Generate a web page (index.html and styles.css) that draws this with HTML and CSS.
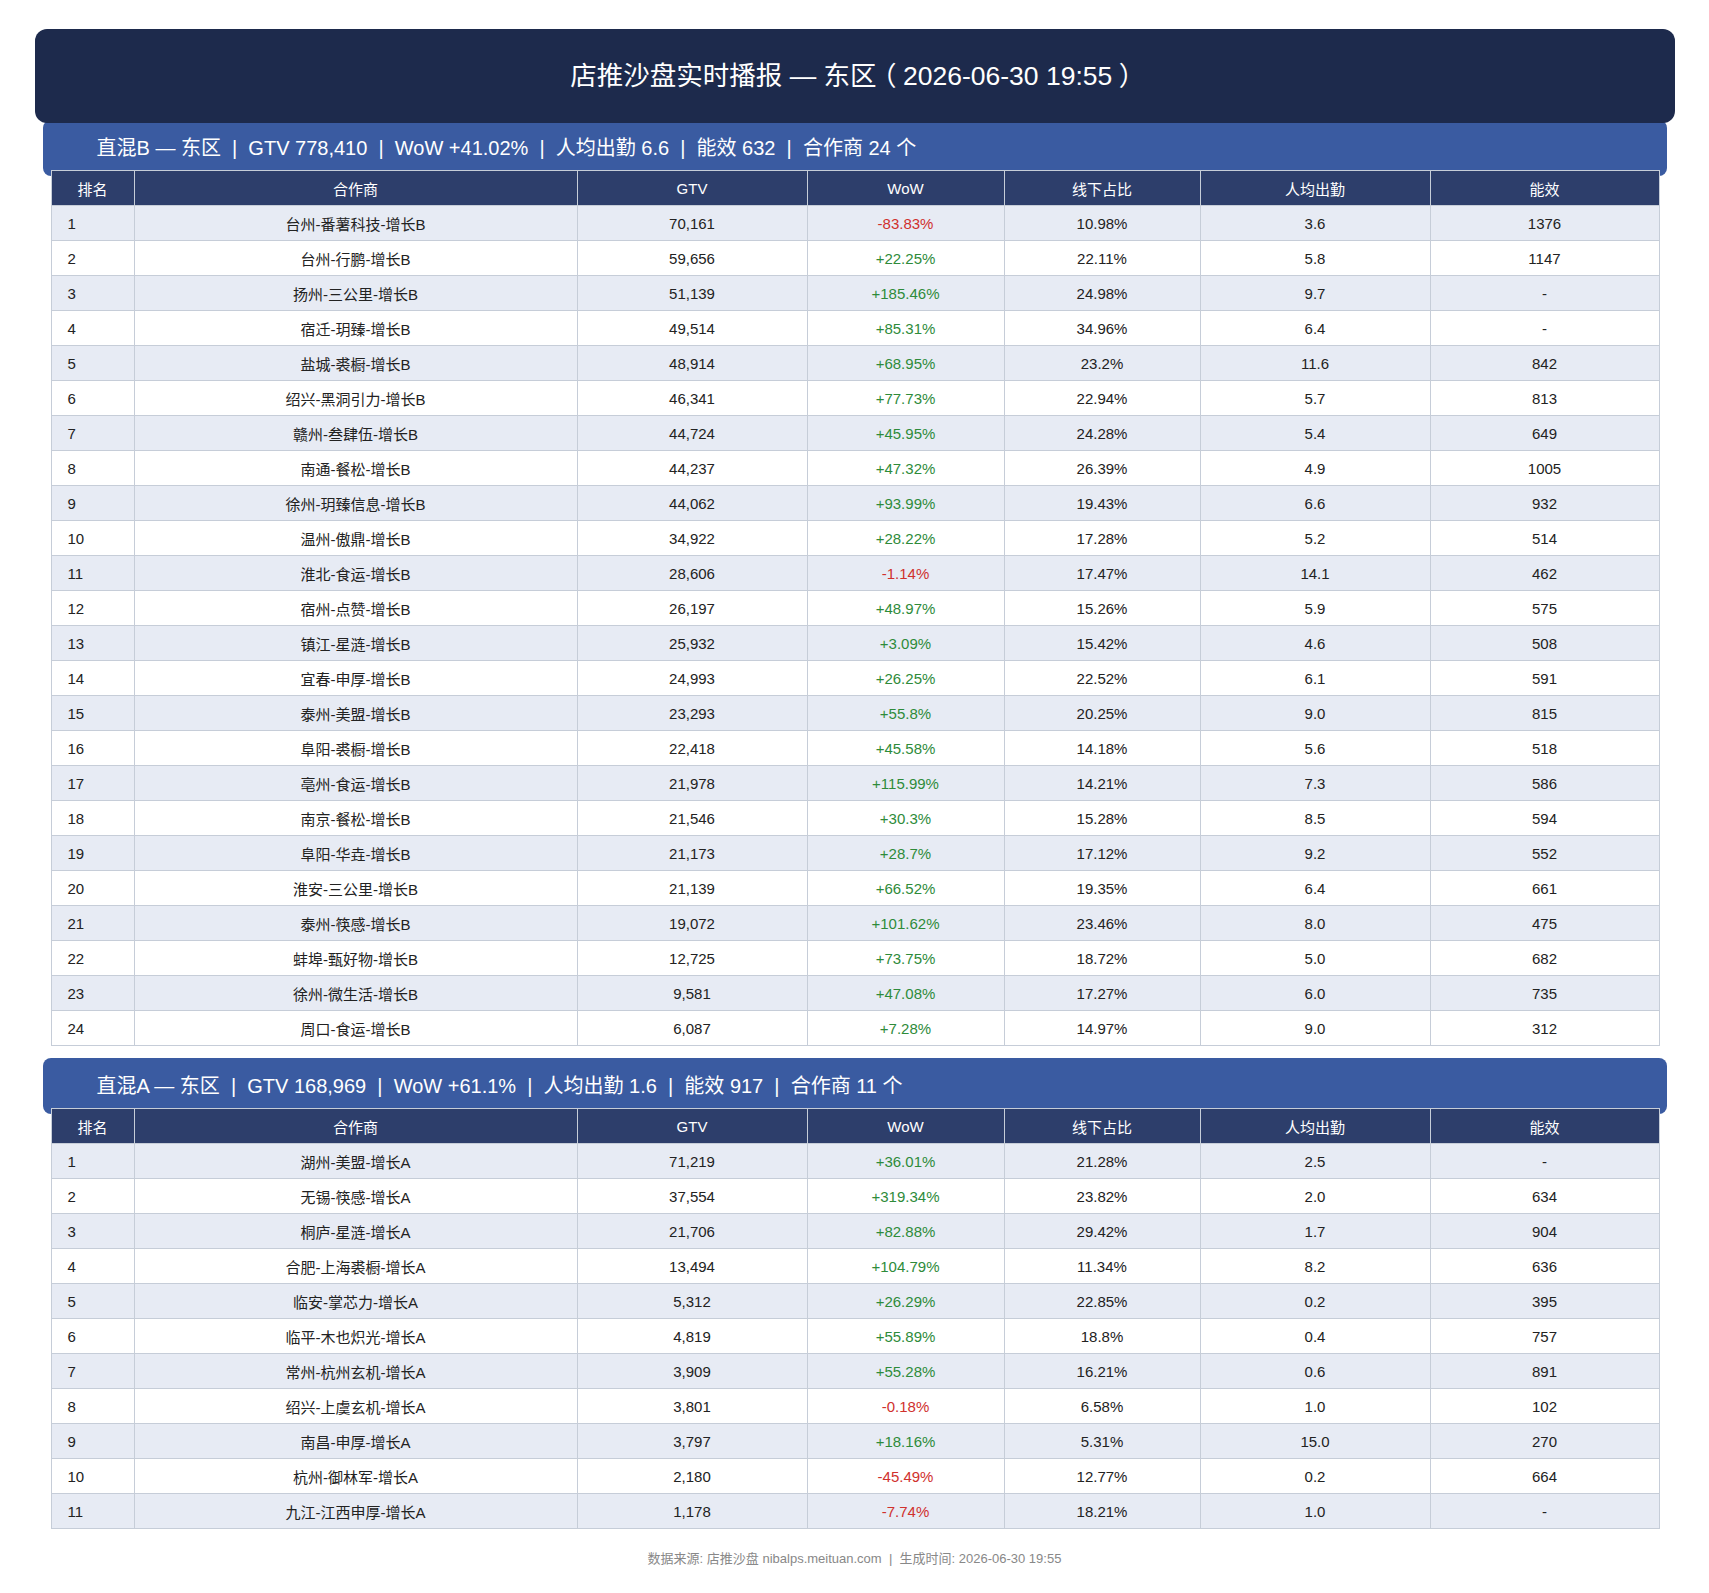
FILE: index.html
```html
<!DOCTYPE html>
<html lang="zh-CN">
<head>
<meta charset="utf-8">
<title>店推沙盘实时播报 — 东区</title>
<link rel="stylesheet" href="styles.css">
</head>
<body>
<div class="page">
  <header class="title-bar"><h1>店推沙盘实时播报 — 东区<span class="fw">（</span>2026-06-30 19:55<span class="fw">）</span></h1></header>

  <section class="block">
    <h2 class="sec-bar">直混B — 东区&nbsp; |&nbsp; GTV 778,410&nbsp; |&nbsp; WoW +41.02%&nbsp; |&nbsp; 人均出勤 6.6&nbsp; |&nbsp; 能效 632&nbsp; |&nbsp; 合作商 24 个</h2>
    <table class="tbl">
      <colgroup>
        <col class="c-rank"><col class="c-name"><col class="c-gtv"><col class="c-wow"><col class="c-off"><col class="c-att"><col class="c-eff">
      </colgroup>
      <thead>
        <tr><th>排名</th><th>合作商</th><th>GTV</th><th>WoW</th><th>线下占比</th><th>人均出勤</th><th>能效</th></tr>
      </thead>
      <tbody>
        <tr><td class="rank">1</td><td>台州-番薯科技-增长B</td><td>70,161</td><td class="neg">-83.83%</td><td>10.98%</td><td>3.6</td><td>1376</td></tr>
        <tr><td class="rank">2</td><td>台州-行鹏-增长B</td><td>59,656</td><td class="pos">+22.25%</td><td>22.11%</td><td>5.8</td><td>1147</td></tr>
        <tr><td class="rank">3</td><td>扬州-三公里-增长B</td><td>51,139</td><td class="pos">+185.46%</td><td>24.98%</td><td>9.7</td><td>-</td></tr>
        <tr><td class="rank">4</td><td>宿迁-玥臻-增长B</td><td>49,514</td><td class="pos">+85.31%</td><td>34.96%</td><td>6.4</td><td>-</td></tr>
        <tr><td class="rank">5</td><td>盐城-裘橱-增长B</td><td>48,914</td><td class="pos">+68.95%</td><td>23.2%</td><td>11.6</td><td>842</td></tr>
        <tr><td class="rank">6</td><td>绍兴-黑洞引力-增长B</td><td>46,341</td><td class="pos">+77.73%</td><td>22.94%</td><td>5.7</td><td>813</td></tr>
        <tr><td class="rank">7</td><td>赣州-叁肆伍-增长B</td><td>44,724</td><td class="pos">+45.95%</td><td>24.28%</td><td>5.4</td><td>649</td></tr>
        <tr><td class="rank">8</td><td>南通-餐松-增长B</td><td>44,237</td><td class="pos">+47.32%</td><td>26.39%</td><td>4.9</td><td>1005</td></tr>
        <tr><td class="rank">9</td><td>徐州-玥臻信息-增长B</td><td>44,062</td><td class="pos">+93.99%</td><td>19.43%</td><td>6.6</td><td>932</td></tr>
        <tr><td class="rank">10</td><td>温州-傲鼎-增长B</td><td>34,922</td><td class="pos">+28.22%</td><td>17.28%</td><td>5.2</td><td>514</td></tr>
        <tr><td class="rank">11</td><td>淮北-食运-增长B</td><td>28,606</td><td class="neg">-1.14%</td><td>17.47%</td><td>14.1</td><td>462</td></tr>
        <tr><td class="rank">12</td><td>宿州-点赞-增长B</td><td>26,197</td><td class="pos">+48.97%</td><td>15.26%</td><td>5.9</td><td>575</td></tr>
        <tr><td class="rank">13</td><td>镇江-星涟-增长B</td><td>25,932</td><td class="pos">+3.09%</td><td>15.42%</td><td>4.6</td><td>508</td></tr>
        <tr><td class="rank">14</td><td>宜春-申厚-增长B</td><td>24,993</td><td class="pos">+26.25%</td><td>22.52%</td><td>6.1</td><td>591</td></tr>
        <tr><td class="rank">15</td><td>泰州-美盟-增长B</td><td>23,293</td><td class="pos">+55.8%</td><td>20.25%</td><td>9.0</td><td>815</td></tr>
        <tr><td class="rank">16</td><td>阜阳-裘橱-增长B</td><td>22,418</td><td class="pos">+45.58%</td><td>14.18%</td><td>5.6</td><td>518</td></tr>
        <tr><td class="rank">17</td><td>亳州-食运-增长B</td><td>21,978</td><td class="pos">+115.99%</td><td>14.21%</td><td>7.3</td><td>586</td></tr>
        <tr><td class="rank">18</td><td>南京-餐松-增长B</td><td>21,546</td><td class="pos">+30.3%</td><td>15.28%</td><td>8.5</td><td>594</td></tr>
        <tr><td class="rank">19</td><td>阜阳-华垚-增长B</td><td>21,173</td><td class="pos">+28.7%</td><td>17.12%</td><td>9.2</td><td>552</td></tr>
        <tr><td class="rank">20</td><td>淮安-三公里-增长B</td><td>21,139</td><td class="pos">+66.52%</td><td>19.35%</td><td>6.4</td><td>661</td></tr>
        <tr><td class="rank">21</td><td>泰州-筷感-增长B</td><td>19,072</td><td class="pos">+101.62%</td><td>23.46%</td><td>8.0</td><td>475</td></tr>
        <tr><td class="rank">22</td><td>蚌埠-甄好物-增长B</td><td>12,725</td><td class="pos">+73.75%</td><td>18.72%</td><td>5.0</td><td>682</td></tr>
        <tr><td class="rank">23</td><td>徐州-微生活-增长B</td><td>9,581</td><td class="pos">+47.08%</td><td>17.27%</td><td>6.0</td><td>735</td></tr>
        <tr><td class="rank">24</td><td>周口-食运-增长B</td><td>6,087</td><td class="pos">+7.28%</td><td>14.97%</td><td>9.0</td><td>312</td></tr>
      </tbody>
    </table>
  </section>

  <section class="block">
    <h2 class="sec-bar">直混A — 东区&nbsp; |&nbsp; GTV 168,969&nbsp; |&nbsp; WoW +61.1%&nbsp; |&nbsp; 人均出勤 1.6&nbsp; |&nbsp; 能效 917&nbsp; |&nbsp; 合作商 11 个</h2>
    <table class="tbl">
      <colgroup>
        <col class="c-rank"><col class="c-name"><col class="c-gtv"><col class="c-wow"><col class="c-off"><col class="c-att"><col class="c-eff">
      </colgroup>
      <thead>
        <tr><th>排名</th><th>合作商</th><th>GTV</th><th>WoW</th><th>线下占比</th><th>人均出勤</th><th>能效</th></tr>
      </thead>
      <tbody>
        <tr><td class="rank">1</td><td>湖州-美盟-增长A</td><td>71,219</td><td class="pos">+36.01%</td><td>21.28%</td><td>2.5</td><td>-</td></tr>
        <tr><td class="rank">2</td><td>无锡-筷感-增长A</td><td>37,554</td><td class="pos">+319.34%</td><td>23.82%</td><td>2.0</td><td>634</td></tr>
        <tr><td class="rank">3</td><td>桐庐-星涟-增长A</td><td>21,706</td><td class="pos">+82.88%</td><td>29.42%</td><td>1.7</td><td>904</td></tr>
        <tr><td class="rank">4</td><td>合肥-上海裘橱-增长A</td><td>13,494</td><td class="pos">+104.79%</td><td>11.34%</td><td>8.2</td><td>636</td></tr>
        <tr><td class="rank">5</td><td>临安-掌芯力-增长A</td><td>5,312</td><td class="pos">+26.29%</td><td>22.85%</td><td>0.2</td><td>395</td></tr>
        <tr><td class="rank">6</td><td>临平-木也炽光-增长A</td><td>4,819</td><td class="pos">+55.89%</td><td>18.8%</td><td>0.4</td><td>757</td></tr>
        <tr><td class="rank">7</td><td>常州-杭州玄机-增长A</td><td>3,909</td><td class="pos">+55.28%</td><td>16.21%</td><td>0.6</td><td>891</td></tr>
        <tr><td class="rank">8</td><td>绍兴-上虞玄机-增长A</td><td>3,801</td><td class="neg">-0.18%</td><td>6.58%</td><td>1.0</td><td>102</td></tr>
        <tr><td class="rank">9</td><td>南昌-申厚-增长A</td><td>3,797</td><td class="pos">+18.16%</td><td>5.31%</td><td>15.0</td><td>270</td></tr>
        <tr><td class="rank">10</td><td>杭州-御林军-增长A</td><td>2,180</td><td class="neg">-45.49%</td><td>12.77%</td><td>0.2</td><td>664</td></tr>
        <tr><td class="rank">11</td><td>九江-江西申厚-增长A</td><td>1,178</td><td class="neg">-7.74%</td><td>18.21%</td><td>1.0</td><td>-</td></tr>
      </tbody>
    </table>
  </section>

  <footer class="foot">数据来源: 店推沙盘 nibalps.meituan.com &nbsp;|&nbsp; 生成时间: 2026-06-30 19:55</footer>
</div>
</body>
</html>
```

FILE: styles.css
```css
html, body {
  margin: 0;
  padding: 0;
  background: #ffffff;
}

body {
  font-family: "Liberation Sans", Arial, "Noto Sans CJK SC", sans-serif;
  color: #222222;
  text-spacing-trim: space-all;
}

.page {
  width: 1640px;
  margin: 0 auto;
  padding: 29px 0 28px;
}

.title-bar {
  position: relative;
  z-index: 2;
  height: 94px;
  box-sizing: border-box;
  background: #1d2a4c;
  border-radius: 12px;
  display: flex;
  align-items: center;
  justify-content: center;
}

.title-bar h1 {
  margin: 0;
  font-size: 26.5px;
  line-height: 32px;
  font-weight: normal;
  color: #ffffff;
}

/* full-width punctuation rendered centred in a 1em cell */
.fw {
  display: inline-block;
  width: 1em;
  text-align: center;
  font-feature-settings: "halt";
}

.block {
  display: flex;
  flex-direction: column;
}

.block + .block {
  margin-top: 12px;
}

.title-bar + .block {
  margin-top: -3px;
}

.sec-bar {
  margin: 0 8px;
  height: 56px;
  box-sizing: border-box;
  padding: 0 0 0 54px;
  line-height: 56px;
  background: #3a5ba1;
  border-radius: 8px;
  color: #ffffff;
  font-size: 20px;
  font-weight: normal;
  white-space: nowrap;
}

.tbl {
  position: relative;
  margin: -6px 16px 0;
  width: 1608px;
  border-collapse: collapse;
  table-layout: fixed;
  font-size: 15px;
}

.c-rank { width: 83px; }
.c-name { width: 443px; }
.c-gtv { width: 230px; }
.c-wow { width: 197px; }
.c-off { width: 196px; }
.c-att { width: 230px; }
.c-eff { width: 229px; }

.tbl th,
.tbl td {
  border: 1px solid #c6cdd8;
  height: 34px;
  padding: 0 8px;
  text-align: center;
  vertical-align: middle;
}

.tbl th {
  background: #2d3e6b;
  color: #ffffff;
  font-weight: normal;
}

.tbl tbody tr:nth-child(odd) td {
  background: #e7ebf4;
}

.tbl tbody tr:nth-child(even) td {
  background: #ffffff;
}

.tbl td.rank {
  text-align: left;
  padding-left: 16px;
}

.tbl td.neg { color: #d0312d; }
.tbl td.pos { color: #2e8b3a; }

.foot {
  margin-top: 22px;
  text-align: center;
  font-size: 13px;
  line-height: 15px;
  color: #888888;
}
```
